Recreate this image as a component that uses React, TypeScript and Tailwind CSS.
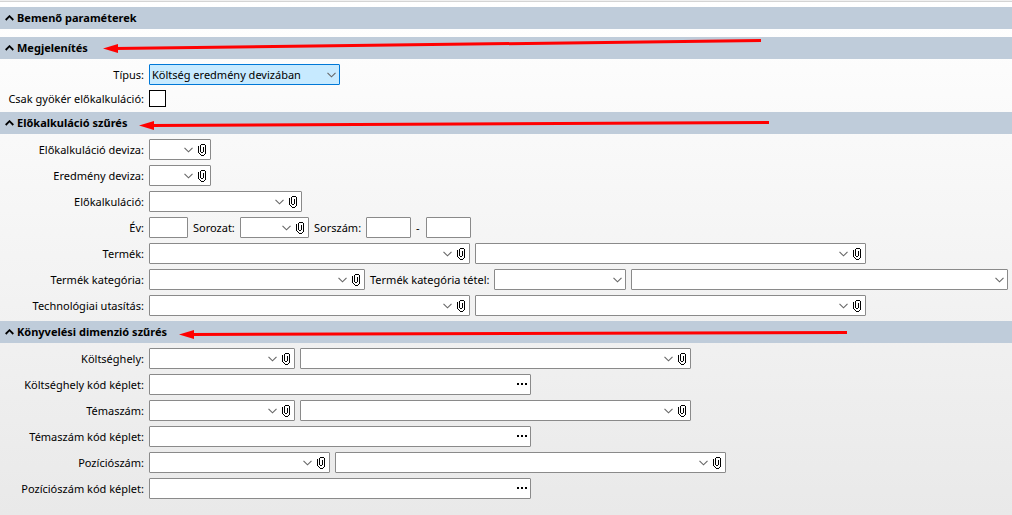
import React, { useState } from 'react';

interface ArrowProps {
  from: [number, number];
  to: [number, number];
}

const Arrow: React.FC<ArrowProps> = ({ from, to }) => {
  const [x, y] = to;
  return (
    <svg className="absolute inset-0 w-full h-full overflow-visible pointer-events-none" aria-hidden="true">
      <line x1={from[0]} y1={from[1]} x2={x + 12} y2={y} stroke="#ff0000" strokeWidth="3" />
      <polygon points={`${x},${y} ${x + 15},${y - 4.5} ${x + 15},${y + 4.5}`} fill="#ff0000" />
    </svg>
  );
};

interface SectionProps {
  title: string;
  arrow?: ArrowProps;
  children?: React.ReactNode;
}

const Section: React.FC<SectionProps> = ({ title, arrow, children }) => {
  const [open, setOpen] = useState(true);

  return (
    <section>
      <h2 className="relative">
        <button
          type="button"
          aria-expanded={open}
          onClick={() => setOpen(!open)}
          className="flex w-full h-[22px] items-center gap-[3px] bg-[#bfccda] pl-[5px] text-left font-bold"
        >
          <svg className={open ? '' : 'rotate-180'} width="9" height="6" viewBox="0 0 9 6" fill="none" aria-hidden="true">
            <path d="M0.7 5 L4.5 1.2 L8.3 5" stroke="#000" strokeWidth="1.8" />
          </svg>
          {title}
        </button>
        {arrow && <Arrow {...arrow} />}
      </h2>
      {open && children && <div className="flex flex-col gap-[5px] py-[5px] pr-1">{children}</div>}
    </section>
  );
};

interface RowProps {
  label: string;
  id: string;
  children: React.ReactNode;
}

const Row: React.FC<RowProps> = ({ label, id, children }) => (
  <div className="flex items-center gap-[5px]">
    <label htmlFor={id} className="w-36 shrink-0 whitespace-nowrap text-right">{label}</label>
    {children}
  </div>
);

const ClipIcon = () => (
  <svg width="9" height="12" viewBox="0 0 9 12" fill="none" shapeRendering="crispEdges" aria-hidden="true">
    <path
      d="M0.5 2V9M1 9.5H2M2 10.5H3M3 11.5H6M6 10.5H7M7.5 10V1M3 0.5H7M2.5 1V8M3 8.5H5M5.5 8V3"
      stroke="#000"
    />
  </svg>
);

interface ComboProps {
  id?: string;
  name?: string;
  width: string;
  clip?: boolean;
  active?: boolean;
  option?: string;
}

const Combo: React.FC<ComboProps> = ({ id, name, width, clip, active, option = '' }) => (
  <div
    className={`flex h-[21px] items-center rounded-[1px] border ${width} ${active ? 'border-[#0078d7] bg-[#c7eaff]' : 'border-[#8a8a8a] bg-white'}`}
  >
    <select id={id} aria-label={name} className="h-full min-w-0 flex-1 appearance-none bg-transparent pl-0.5 outline-none">
      <option>{option}</option>
    </select>
    <svg className="-ml-3 mr-[3px] shrink-0 pointer-events-none" width="9" height="6" viewBox="0 0 9 6" fill="none" aria-hidden="true">
      <path d="M0.5 0.8 L4.5 4.8 L8.5 0.8" stroke="#666" strokeWidth="1.1" />
    </svg>
    {clip && (
      <button type="button" aria-label="Csatolás" className="ml-0.5 mr-[3px] shrink-0">
        <ClipIcon />
      </button>
    )}
  </div>
);

const TextBox: React.FC<{ id?: string; name?: string; width: string }> = ({ id, name, width }) => (
  <input id={id} aria-label={name} type="text" className={`h-[21px] rounded-[1px] border border-[#8a8a8a] bg-white px-0.5 outline-none ${width}`} />
);

const FormulaBox: React.FC<{ id: string }> = ({ id }) => (
  <div className="flex h-[21px] w-[382px] items-center rounded-[1px] border border-[#8a8a8a] bg-white">
    <input id={id} type="text" className="h-full min-w-0 flex-1 bg-transparent px-0.5 outline-none" />
    <button type="button" aria-label="Képlet szerkesztése" className="mr-[3px] shrink-0">
      <svg width="10" height="4" viewBox="0 0 10 4" aria-hidden="true">
        <path d="M0 0h2v2H0zM4 0h2v2H4zM8 0h2v2H8z" fill="#000" />
      </svg>
    </button>
  </div>
);

export default function App() {
  return (
    <main className="min-h-screen bg-linear-to-b from-white to-[#e9e9e9] font-['Noto_Sans','Open_Sans',sans-serif] text-[11px] leading-4 text-black">
      <div className="h-0.5 border-b border-[#d4d4d4] bg-[#f0f0f0]" />
      <form className="pt-[5px]" onSubmit={(e) => e.preventDefault()}>
        <div className="mb-2">
          <Section title="Bemenő paraméterek" />
        </div>

        <Section title="Megjelenítés" arrow={{ from: [761, 3.5], to: [103, 11.5] }}>
          <Row label="Típus:" id="tipus">
            <Combo id="tipus" width="w-[191px]" active option="Költség eredmény devizában" />
          </Row>
          <Row label="Csak gyökér előkalkuláció:" id="gyoker">
            <input id="gyoker" type="checkbox" className="size-[17px] appearance-none border border-black bg-white checked:bg-black" />
          </Row>
        </Section>

        <Section title="Előkalkuláció szűrés" arrow={{ from: [769, 10.5], to: [139, 13.5] }}>
          <Row label="Előkalkuláció deviza:" id="elokalk-deviza">
            <Combo id="elokalk-deviza" width="w-[62px]" clip />
          </Row>
          <Row label="Eredmény deviza:" id="eredmeny-deviza">
            <Combo id="eredmeny-deviza" width="w-[62px]" clip />
          </Row>
          <Row label="Előkalkuláció:" id="elokalk">
            <Combo id="elokalk" width="w-[153px]" clip />
          </Row>
          <Row label="Év:" id="ev">
            <TextBox id="ev" width="w-[39px]" />
            <label htmlFor="sorozat" className="w-[42px] whitespace-nowrap">Sorozat:</label>
            <Combo id="sorozat" width="w-[69px]" clip />
            <label htmlFor="sorszam" className="w-[47px] whitespace-nowrap">Sorszám:</label>
            <TextBox id="sorszam" width="w-[45px]" />
            <span className="w-[5px]">-</span>
            <TextBox name="Sorszám vége" width="w-[45px]" />
          </Row>
          <Row label="Termék:" id="termek">
            <Combo id="termek" width="w-[321px]" clip />
            <Combo name="Termék neve" width="w-[391px]" clip />
          </Row>
          <Row label="Termék kategória:" id="kategoria">
            <Combo id="kategoria" width="w-[216px]" clip />
            <label htmlFor="tetel" className="w-[119px] whitespace-nowrap">Termék kategória tétel:</label>
            <Combo id="tetel" width="w-[132px]" />
            <Combo name="Tétel neve" width="flex-1" />
          </Row>
          <Row label="Technológiai utasítás:" id="utasitas">
            <Combo id="utasitas" width="w-[321px]" clip />
            <Combo name="Utasítás neve" width="w-[391px]" clip />
          </Row>
        </Section>

        <Section title="Könyvelési dimenzió szűrés" arrow={{ from: [847, 11.5], to: [179, 13.5] }}>
          <Row label="Költséghely:" id="koltseghely">
            <Combo id="koltseghely" width="w-[146px]" clip />
            <Combo name="Költséghely neve" width="w-[391px]" clip />
          </Row>
          <Row label="Költséghely kód képlet:" id="koltseghely-keplet">
            <FormulaBox id="koltseghely-keplet" />
          </Row>
          <Row label="Témaszám:" id="temaszam">
            <Combo id="temaszam" width="w-[146px]" clip />
            <Combo name="Témaszám neve" width="w-[391px]" clip />
          </Row>
          <Row label="Témaszám kód képlet:" id="temaszam-keplet">
            <FormulaBox id="temaszam-keplet" />
          </Row>
          <Row label="Pozíciószám:" id="pozicioszam">
            <Combo id="pozicioszam" width="w-[181px]" clip />
            <Combo name="Pozíciószám neve" width="w-[391px]" clip />
          </Row>
          <Row label="Pozíciószám kód képlet:" id="pozicioszam-keplet">
            <FormulaBox id="pozicioszam-keplet" />
          </Row>
        </Section>
      </form>
    </main>
  );
}
